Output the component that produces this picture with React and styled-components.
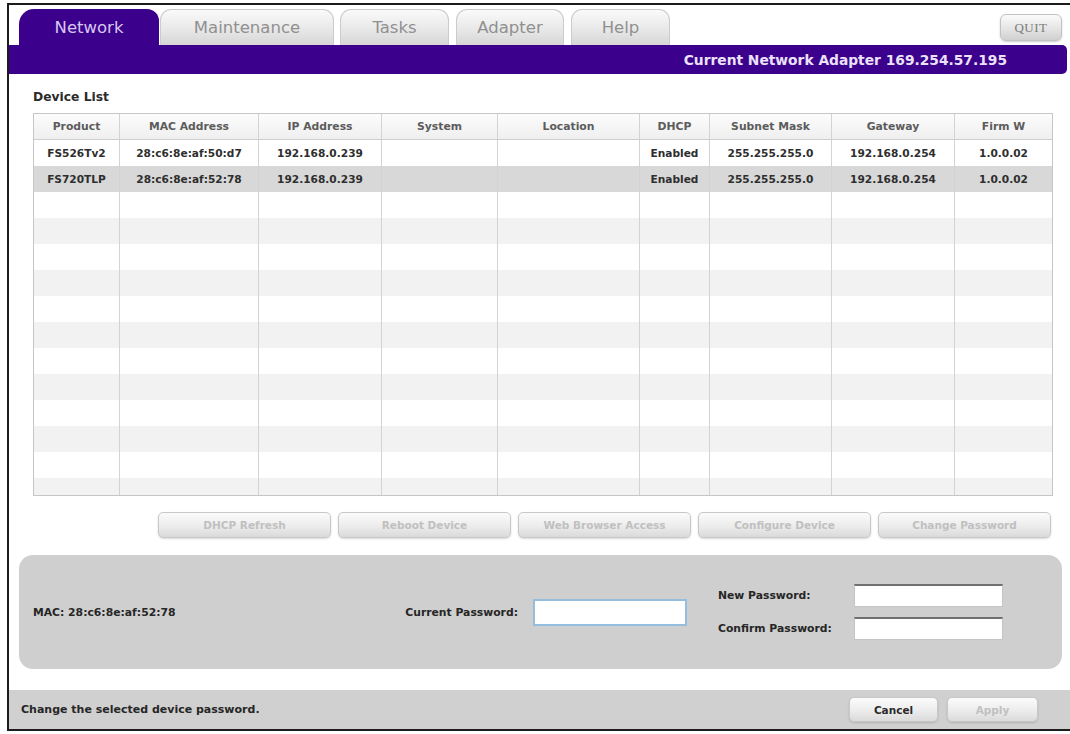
import React from 'react';
import styled, { createGlobalStyle } from 'styled-components';

const GlobalStyle = createGlobalStyle`
    html, body {
        margin: 0;
        padding: 0;
        background: #fff;
        font-family: "DejaVu Sans", Verdana, sans-serif;
    }
`;

const Frame = styled.div`
    display: flex;
    flex-direction: column;
    box-sizing: border-box;
    margin: 3px 0 0 7px;
    width: 1063px;
    height: 728px;
    border: 2px solid #1c1c1c;
    border-right: none;
    background: #fff;
    overflow: hidden;
`;

const TabStrip = styled.div`
    display: flex;
    align-items: flex-end;
    height: 40px;
    padding-left: 10px;
    padding-right: 8px;
`;

const Tab = styled.div`
    box-sizing: border-box;
    display: flex;
    align-items: center;
    justify-content: center;
    width: ${p => p.$w}px;
    height: 36px;
    margin-right: ${p => p.$gap}px;
    font-size: 16.5px;
    color: ${p => p.$active ? '#d8c8f4' : '#909090'};
    background: ${p => p.$active
        ? '#3b008c'
        : 'linear-gradient(#fafafa, #e8e8e8 55%, #d6d6d6)'};
    border: ${p => p.$active ? 'none' : '1px solid #cbcbcb'};
    border-bottom: none;
    border-radius: ${p => p.$active ? '15px 12px 0 0' : '11px 11px 0 0'};
`;

const QuitButton = styled.button`
    margin-left: auto;
    align-self: flex-start;
    margin-top: 9px;
    width: 62px;
    height: 27px;
    padding: 0;
    font-family: "Liberation Serif", "DejaVu Serif", serif;
    font-size: 13px;
    letter-spacing: 0.5px;
    color: #7b7b7b;
    background: linear-gradient(#fbfbfb, #e2e2e2 60%, #d0d0d0);
    border: 1px solid #c2c2c2;
    border-radius: 6px;
    box-shadow: 0 1px 2px rgba(0, 0, 0, .2);
`;

const AdapterBar = styled.div`
    display: flex;
    align-items: center;
    justify-content: flex-end;
    height: 29px;
    margin-right: 3px;
    padding-right: 60px;
    background: #3b008c;
    border-radius: 0 5px 5px 0;
    color: #ebe2fa;
    font-weight: bold;
    font-size: 13.8px;
`;

const SectionTitle = styled.div`
    height: 39px;
    padding-left: 24px;
    box-sizing: border-box;
    padding-top: 16px;
    font-weight: bold;
    font-size: 12.3px;
    color: #2b2b2b;
`;

const columns = '86px 139px 123px 116px 142px 70px 122px 123px 97px';

const Table = styled.div`
    margin-left: 24px;
    width: 1020px;
    height: 383px;
    box-sizing: border-box;
    border: 1px solid #c6c6c6;
    overflow: hidden;
    background: #fff;
`;

const Row = styled.div`
    display: grid;
    grid-template-columns: ${columns};
    height: ${p => p.$head ? 25 : 26}px;
    background: ${p => p.$bg};
    border-bottom: ${p => p.$head ? '1px solid #cfcfcf' : 'none'};
`;

const Cell = styled.div`
    display: flex;
    align-items: center;
    justify-content: center;
    border-right: 1px solid #d3d3d3;
    font-weight: bold;
    font-size: ${p => p.$head ? '10.8px' : '10.6px'};
    color: ${p => p.$head ? '#5c5c5c' : '#2e2e2e'};
    white-space: nowrap;
    overflow: hidden;
    &:last-child {
        border-right: none;
    }
`;

const ActionRow = styled.div`
    display: flex;
    gap: 7px;
    margin: 16px 0 0 149px;
`;

const GreyButton = styled.button`
    width: ${p => p.$w || 173}px;
    height: ${p => p.$h || 26}px;
    padding: 0;
    font-family: "DejaVu Sans", Verdana, sans-serif;
    font-weight: bold;
    font-size: 10.5px;
    color: ${p => p.$enabled ? '#2a2a2a' : '#c0c0c0'};
    background: linear-gradient(#fbfbfb, #ececec 55%, #dadada);
    border: 1px solid #c8c8c8;
    border-radius: 5px;
    box-shadow: 0 1px 2px rgba(0, 0, 0, .15);
`;

const PasswordPanel = styled.div`
    display: flex;
    align-items: center;
    box-sizing: border-box;
    height: 114px;
    margin: 17px 8px 0 10px;
    padding: 0 59px 0 14px;
    background: #cfcfcf;
    border-radius: 14px;
`;

const Label = styled.span`
    font-weight: bold;
    font-size: 10.8px;
    color: #262626;
    white-space: nowrap;
`;

const MacLabel = styled(Label)`
    flex: 1;
`;

const CurrentInput = styled.input`
    box-sizing: border-box;
    width: 154px;
    height: 27px;
    margin: 0 31px 0 15px;
    border: 2px solid #93bedf;
    background: #fff;
    outline: none;
`;

const NewPasswordGrid = styled.div`
    display: grid;
    grid-template-columns: 136px 149px;
    row-gap: 10px;
    align-items: center;
`;

const PlainInput = styled.input`
    box-sizing: border-box;
    width: 149px;
    height: 23px;
    border: 1px solid #c4c4c4;
    border-top: 2px solid #707070;
    background: #fff;
    outline: none;
`;

const Footer = styled.div`
    display: flex;
    align-items: center;
    height: 39px;
    margin-top: 21px;
    padding: 0 32px 0 12px;
    background: #d0d0d0;
    gap: 9px;
`;

const FooterText = styled(Label)`
    flex: 1;
    font-size: 11px;
`;

const tabs = [
    { name: 'Network', w: 140, gap: 1, active: true },
    { name: 'Maintenance', w: 174, gap: 6 },
    { name: 'Tasks', w: 109, gap: 7 },
    { name: 'Adapter', w: 108, gap: 7 },
    { name: 'Help', w: 99, gap: 0 },
];

const headers = ['Product', 'MAC Address', 'IP Address', 'System', 'Location', 'DHCP', 'Subnet Mask', 'Gateway', 'Firm W'];

const devices = [
    ['FS526Tv2', '28:c6:8e:af:50:d7', '192.168.0.239', '', '', 'Enabled', '255.255.255.0', '192.168.0.254', '1.0.0.02'],
    ['FS720TLP', '28:c6:8e:af:52:78', '192.168.0.239', '', '', 'Enabled', '255.255.255.0', '192.168.0.254', '1.0.0.02'],
];

const actions = ['DHCP Refresh', 'Reboot Device', 'Web Browser Access', 'Configure Device', 'Change Password'];

const rowBackground = index => {
    if (index === 1) return '#d8d8d8';
    return index % 2 ? '#f2f2f2' : '#fff';
};

export default function App() {
    const rows = Array.from({ length: 14 }, (_, i) => devices[i] || Array(9).fill(''));

    return (
        <>
            <GlobalStyle />
            <Frame>
                <TabStrip>
                    {tabs.map(tab => (
                        <Tab key={tab.name} $w={tab.w} $gap={tab.gap} $active={tab.active}>
                            {tab.name}
                        </Tab>
                    ))}
                    <QuitButton>QUIT</QuitButton>
                </TabStrip>
                <AdapterBar>Current Network Adapter 169.254.57.195</AdapterBar>

                <SectionTitle>Device List</SectionTitle>
                <Table>
                    <Row $head $bg="linear-gradient(#fcfcfc, #efefef)">
                        {headers.map(h => <Cell key={h} $head>{h}</Cell>)}
                    </Row>
                    {rows.map((row, i) => (
                        <Row key={i} $bg={rowBackground(i)}>
                            {row.map((value, j) => <Cell key={j}>{value}</Cell>)}
                        </Row>
                    ))}
                </Table>

                <ActionRow>
                    {actions.map(a => <GreyButton key={a}>{a}</GreyButton>)}
                </ActionRow>

                <PasswordPanel>
                    <MacLabel>MAC: 28:c6:8e:af:52:78</MacLabel>
                    <Label>Current Password:</Label>
                    <CurrentInput type="password" />
                    <NewPasswordGrid>
                        <Label>New Password:</Label>
                        <PlainInput type="password" />
                        <Label>Confirm Password:</Label>
                        <PlainInput type="password" />
                    </NewPasswordGrid>
                </PasswordPanel>

                <Footer>
                    <FooterText>Change the selected device password.</FooterText>
                    <GreyButton $enabled $w={89} $h={25}>Cancel</GreyButton>
                    <GreyButton $w={91} $h={25}>Apply</GreyButton>
                </Footer>
            </Frame>
        </>
    );
}
